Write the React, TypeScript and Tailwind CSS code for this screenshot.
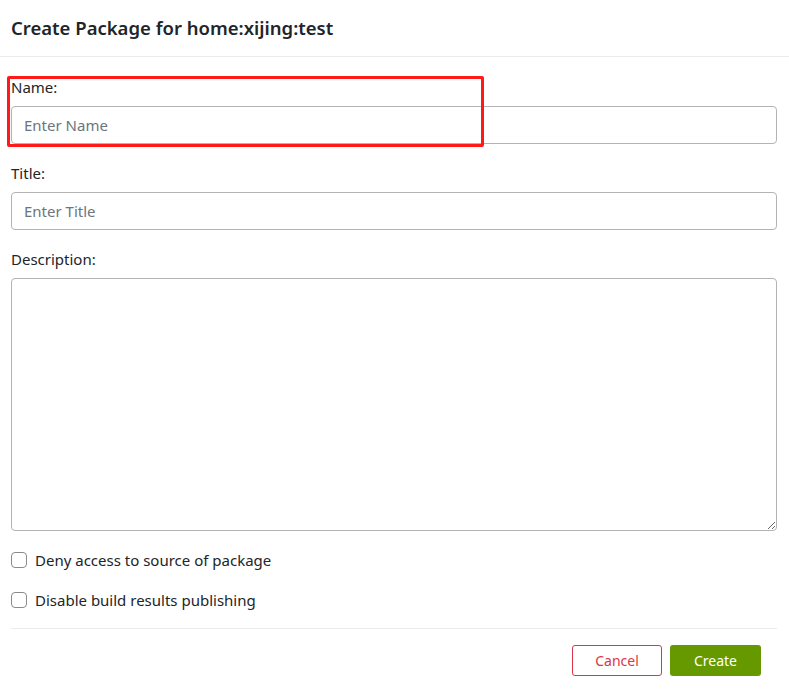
import React from 'react';

const font = { fontFamily: '"Noto Sans", "Open Sans", sans-serif' };

const Field: React.FC<{ label: string; placeholder: string }> = ({ label, placeholder }) => (
  <div className="mb-[18px]">
    <label className="block text-[15px] leading-[22px] text-[#212529] mb-[8px]">{label}</label>
    <input
      placeholder={placeholder}
      className="block w-full h-[38px] px-[12px] text-[15px] border border-[#b3b3b3] rounded-[4px] bg-white placeholder:text-[#6c757d] outline-none"
    />
  </div>
);

const Check: React.FC<{ label: string }> = ({ label }) => (
  <label className="flex items-center h-[22px] mb-[18px] text-[15px] text-[#212529]">
    <span className="w-[16px] h-[16px] border border-[#8a8a8a] rounded-[4px] bg-white mr-[8px]"></span>
    {label}
  </label>
);

export default function App() {
  return (
    <div className="w-[789px] h-[697px] bg-white relative overflow-hidden" style={font}>
      <div className="h-[57px] px-[11px] flex items-center border-b border-[#e9ecef]">
        <h2 className="text-[18.5px] font-semibold text-[#212529]">Create Package for home:xijing:test</h2>
      </div>

      <div className="px-[11px] pt-[19px] w-[788px]">
        <Field label="Name:" placeholder="Enter Name" />
        <Field label="Title:" placeholder="Enter Title" />
        <div className="mb-[18px]">
          <label className="block text-[15px] leading-[22px] text-[#212529] mb-[8px]">Description:</label>
          <textarea className="block w-full h-[253px] border border-[#b3b3b3] rounded-[4px] bg-white outline-none"></textarea>
        </div>
        <Check label="Deny access to source of package" />
        <Check label="Disable build results publishing" />
        <div className="border-t border-[#e9ecef] mt-[-1px] pt-[16px] flex justify-end gap-[8px] pr-[16px]">
          <button className="w-[90px] h-[31px] border border-[#dc3545] rounded-[3px] text-[14px] text-[#dc3545] bg-white">
            Cancel
          </button>
          <button className="w-[91px] h-[31px] rounded-[3px] text-[14px] text-white bg-[#669900]">
            Create
          </button>
        </div>
      </div>

      {/* annotation box */}
      <div className="absolute left-[7px] top-[76px] w-[477px] h-[71px] border-[3px] border-[#ff1a1a] rounded-[2px] pointer-events-none"></div>
    </div>
  );
}
